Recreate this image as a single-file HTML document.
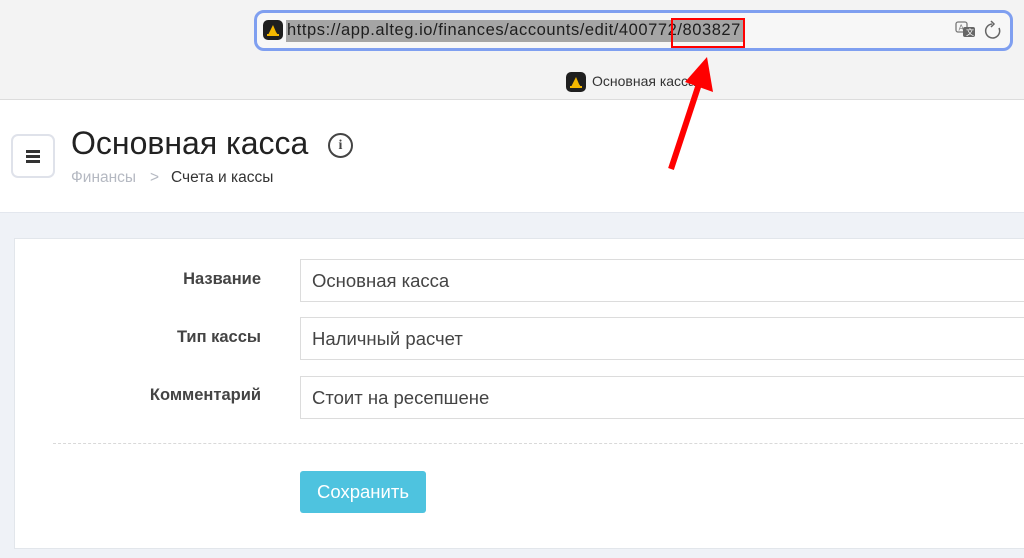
<!DOCTYPE html>
<html><head><meta charset="utf-8"><style>
*{box-sizing:border-box;margin:0;padding:0}
body{width:1024px;height:558px;overflow:hidden;position:relative;background:#eff2f7;font-family:"Liberation Sans",sans-serif;color:#2b2b2b}
.top{position:absolute;left:0;top:0;width:1024px;height:100px;background:#f3f3f3;border-bottom:1px solid #dcdcdc}
.url{position:absolute;left:254px;top:10px;width:759px;height:41px;border:3px solid #7f9ff0;border-radius:10px;background:#f7f7f7}
.fav{position:absolute;width:20px;height:20px;background:#1f1f1f;border-radius:5px}
.sel{position:absolute;left:286px;top:20px;height:22px;width:458px;background:#a5a5a5}
.utext{position:absolute;left:287px;top:21px;font-size:16.5px;color:#1e1e1e;letter-spacing:.56px;white-space:nowrap}
.red{position:absolute;left:671px;top:18px;width:74px;height:30px;border:2px solid #f00}
.tab{position:absolute;left:592px;top:73px;font-size:14px;color:#333}
.hdr{position:absolute;left:0;top:100px;width:1024px;height:113px;background:#fff;border-bottom:1px solid #e3e7ee}
.menu{position:absolute;left:11px;top:134px;width:44px;height:44px;border:2px solid #dfe2ea;border-radius:7px;background:#fff}
.menu i{position:absolute;left:13px;width:14px;height:2.5px;background:#333}
h1{position:absolute;left:71px;top:125px;font-size:32px;font-weight:normal;color:#222;white-space:nowrap}
.info{position:absolute;left:328px;top:133px;width:25px;height:25px;border:2px solid #444;border-radius:50%;font-family:"Liberation Serif",serif;font-weight:bold;font-size:14px;text-align:center;line-height:21px;color:#444}
.bc{position:absolute;top:169px;font-size:15.5px}
.card{position:absolute;left:14px;top:238px;width:1020px;height:311px;background:#fff;border:1px solid #e2e6eb}
.lbl{position:absolute;right:763px;font-size:16.5px;font-weight:bold;color:#444;white-space:nowrap}
.inp{position:absolute;left:300px;width:740px;height:43px;border:1px solid #dcdcdc;background:#fff;font-size:18.5px;color:#444;padding:10px 0 0 11px}
.dash{position:absolute;left:53px;top:443px;width:980px;border-top:1px dashed #d9d9d9}
.btn{position:absolute;left:300px;top:471px;width:126px;height:42px;background:#4ec3df;border-radius:3px;color:#fff;font-size:18.5px;text-align:center;line-height:42px}
</style></head><body>
<div class="top">
 <div class="url"></div>
 <div class="fav" style="left:263px;top:20px"><svg width="20" height="20"><path d="M5 15 L10 5 L13 12 L15 15 Z" fill="#f5b800"/><rect x="4" y="14" width="12" height="2" fill="#f5b800"/></svg></div>
 <div class="sel"></div>
 <div class="utext">https://app.alteg.io/finances/accounts/edit/400772/803827</div>
 <div class="red"></div>
 <svg style="position:absolute;left:954px;top:20px" width="50" height="22"><rect x="2" y="2" width="11" height="10" rx="2" fill="none" stroke="#777" stroke-width="1.3"/><text x="4.5" y="10.5" font-size="8" fill="#777" font-family="Liberation Sans">A</text><rect x="9" y="7" width="12" height="10" rx="2" fill="#666"/><text x="12" y="15" font-size="8" fill="#fff">文</text><path d="M45 8 A7 7 0 1 1 38 4" fill="none" stroke="#666" stroke-width="1.5"/><path d="M37 1 L40 4 L37 7" fill="none" stroke="#666" stroke-width="1.5"/></svg>
 <div class="fav" style="left:566px;top:72px"><svg width="20" height="20"><path d="M5 15 L10 5 L13 12 L15 15 Z" fill="#f5b800"/><rect x="4" y="14" width="12" height="2" fill="#f5b800"/></svg></div>
 <div class="tab">Основная касса</div>
</div>
<div class="hdr"></div>
<div class="menu"><i style="top:14px"></i><i style="top:19px"></i><i style="top:24px"></i></div>
<h1>Основная касса</h1>
<div class="info">i</div>
<div class="bc" style="left:71px;color:#b5b9c2">Финансы</div>
<div class="bc" style="left:150px;color:#b5b9c2">&gt;</div>
<div class="bc" style="left:171px;color:#333">Счета и кассы</div>
<div class="card"></div>
<div class="lbl" style="top:270px">Название</div>
<div class="lbl" style="top:328px">Тип кассы</div>
<div class="lbl" style="top:386px">Комментарий</div>
<div class="inp" style="top:259px">Основная касса</div>
<div class="inp" style="top:317px">Наличный расчет</div>
<div class="inp" style="top:376px">Стоит на ресепшене</div>
<div class="dash"></div>
<div class="btn">Сохранить</div>
<svg style="position:absolute;left:0;top:0" width="1024" height="558"><line x1="671" y1="169" x2="699" y2="84" stroke="#f00" stroke-width="6"/><polygon points="707,57 685,82 713,92" fill="#f00"/></svg>
</body></html>
